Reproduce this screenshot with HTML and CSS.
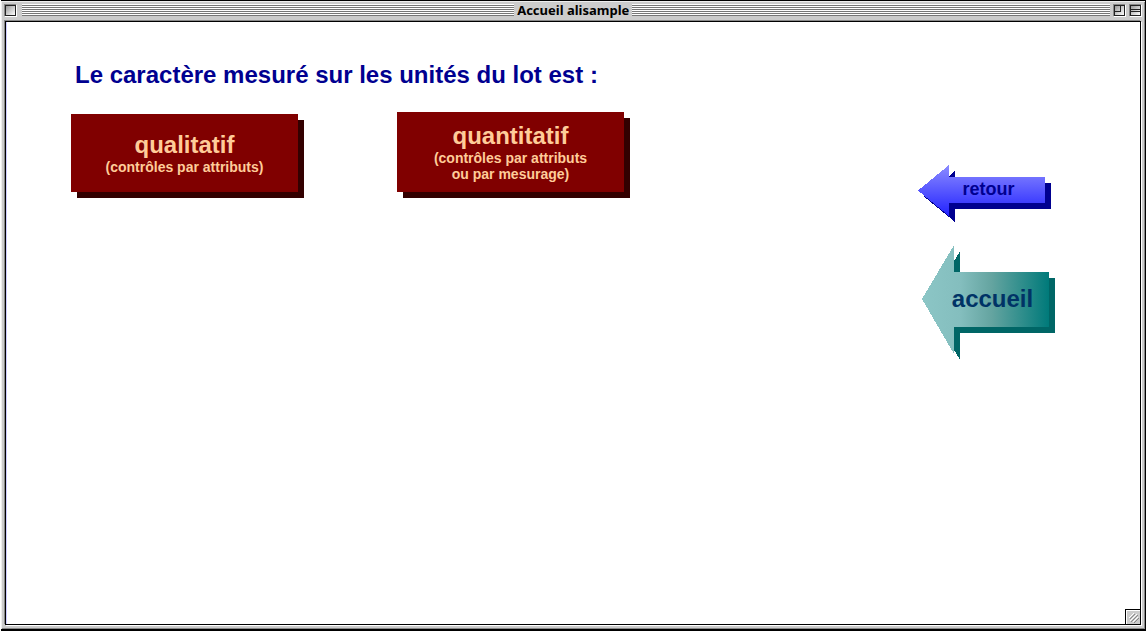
FILE: index.html
```html
<!DOCTYPE html>
<html lang="fr">
<head>
<meta charset="utf-8">
<title>Accueil alisample</title>
<link rel="stylesheet" href="styles.css">
</head>
<body>
<div class="window">
  <header class="titlebar">
    <button class="box" type="button" aria-label="Fermer">
      <svg width="13" height="13" viewBox="0 0 13 13" shape-rendering="crispEdges"><defs><linearGradient id="metal" x1="0" y1="0" x2="1" y2="1"><stop offset="0" stop-color="#999"/><stop offset="1" stop-color="#fff"/></linearGradient></defs><path fill="#888" d="M0 0h12v12H0z"/><path fill="#fff" d="M12 1h1v12H1v-1h11z"/><path fill="#222" d="M1 1h11v11H1z"/><path fill="url(#metal)" d="M2 2h9v9H2z"/></svg>
    </button>
    <span class="stripes"></span>
    <h1 class="title">Accueil alisample</h1>
    <span class="stripes stripes-end"></span>
    <button class="box" type="button" aria-label="Agrandir">
      <svg width="13" height="13" viewBox="0 0 13 13" shape-rendering="crispEdges"><path fill="#888" d="M0 0h12v12H0z"/><path fill="#fff" d="M12 1h1v12H1v-1h11z"/><path fill="#222" d="M1 1h11v11H1z"/><path fill="url(#metal)" d="M2 2h9v9H2z"/><path fill="#222" d="M7 2h1v6H2V7h5z"/></svg>
    </button>
    <button class="box" type="button" aria-label="Réduire">
      <svg width="13" height="13" viewBox="0 0 13 13" shape-rendering="crispEdges"><path fill="#888" d="M0 0h12v12H0z"/><path fill="#fff" d="M12 1h1v12H1v-1h11z"/><path fill="#222" d="M1 1h11v11H1z"/><path fill="url(#metal)" d="M2 2h9v9H2z"/><path fill="#222" d="M2 5h9v1H2zM2 7h9v1H2z"/></svg>
    </button>
  </header>
  <main class="page">
    <section class="question">
      <h2 class="heading">Le caractère mesuré sur les unités du lot est :</h2>
      <div class="choices">
        <button class="choice" type="button"><span class="name">qualitatif</span><span class="note">(contrôles par attributs)</span></button>
        <button class="choice choice-tall" type="button"><span class="name">quantitatif</span><span class="note">(contrôles par attributs<br>ou par mesurage)</span></button>
      </div>
    </section>
    <nav class="links">
      <a class="arrow arrow-back" href="#retour">
        <svg width="133" height="57" viewBox="0 0 133 57" shape-rendering="crispEdges"><defs><linearGradient id="blue" x1="0" y1="0" x2="0" y2="1"><stop offset="0" stop-color="#8c8cff"/><stop offset="1" stop-color="#2222ff"/></linearGradient></defs><path fill="#000090" d="M6 31.500L37 6v12h96v26H37v13z"/><path fill="url(#blue)" d="M0 25.500L31 0v12h96v26H31v13z"/></svg>
        <span class="label">retour</span>
      </a>
      <a class="arrow arrow-home" href="#accueil">
        <svg width="133" height="115" viewBox="0 0 133 115" shape-rendering="crispEdges"><defs><linearGradient id="teal"><stop offset="0" stop-color="#8cc6c6"/><stop offset=".3" stop-color="#84bebe"/><stop offset=".55" stop-color="#64a4a0"/><stop offset="1" stop-color="#007a7a"/></linearGradient></defs><path fill="#006666" d="M6 60L38 6v27h95v55H38v27z"/><path fill="url(#teal)" d="M0 54L32 0v27h95v55H32v27z"/></svg>
        <span class="label">accueil</span>
      </a>
    </nav>
    <svg class="grip" width="15" height="15" viewBox="0 0 15 15" shape-rendering="crispEdges"><path fill="#ccc" d="M0 0h15v15H0z"/><path fill="#000" d="M0 0h15v1H1v14H0z"/><path fill="#fff" d="M1 1h14v1H2v13H1z"/><path stroke="#fff" d="M4 9l5-5M5 12l7-7M8 13l5-5"/><path stroke="#888" d="M5 10l5-5M6 13l7-7M9 14l5-5"/></svg>
  </main>
</div>
</body>
</html>
```
FILE: styles.css
```css
* { box-sizing: border-box; }
body {
  margin: 0;
  background: #fff;
  font-family: "Liberation Sans", Arial, sans-serif;
  font-weight: bold;
}
button { font: inherit; border: 0; padding: 0; background: none; cursor: pointer; }
svg { display: block; }
.window {
  display: flex;
  flex-direction: column;
  min-height: 100vh;
  padding: 0 4px 4px 4px;
  margin: 0 1px;
  background: #ccc;
  border: 1px solid #000;
  border-width: 1px 1px 2px 0;
  box-shadow: inset 1px 1px #eee, inset -1px -1px #888;
}
.titlebar {
  display: flex;
  align-items: center;
  gap: 3px;
  height: 20px;
  padding-bottom: 2px;
  margin: 0 -1px;
}
.box { flex: none; width: 13px; height: 13px; }
.box:first-child { margin-right: 2px; }
.stripes {
  flex: 34;
  height: 12px;
  background: repeating-linear-gradient(#fff 0 1px, #777 1px 2px);
}
.stripes-end { flex: 33; }
.title {
  margin: 0;
  font: bold 13px/14px "Noto Sans", sans-serif;
  color: #000;
}
.page {
  position: relative;
  flex: 1;
  display: flex;
  justify-content: space-between;
  padding: 39px 89px 40px 65px;
  background: #fff;
  border: 1px solid #000;
  box-shadow: inset 1px 0 #ccf, -1px -1px #888, 1px 1px #fff;
}
.heading {
  margin: 0 0 23px 4px;
  font-size: 24px;
  line-height: 28px;
  color: #000090;
}
.choices { display: flex; align-items: flex-end; gap: 99px; }
.choice {
  display: flex;
  flex-direction: column;
  align-items: center;
  justify-content: center;
  width: 227px;
  height: 78px;
  color: #ffcc99;
  background: #800000;
  box-shadow: 6px 6px #330000;
}
.choice-tall { height: 80px; }
.name { font-size: 24px; line-height: 28px; }
.note { font-size: 14px; line-height: 16px; }
.links {
  display: flex;
  flex-direction: column;
  gap: 23px;
  padding-top: 104px;
}
.arrow { display: grid; text-decoration: none; }
.arrow > * { grid-area: 1 / 1; }
.arrow-home { margin-left: 4px; margin-right: -4px; }
.label { z-index: 1; align-self: center; justify-self: center; }
.arrow-back .label { font-size: 18px; line-height: 20px; color: #000090; padding: 0 0 10px 8px; }
.arrow-home .label { font-size: 24px; line-height: 28px; color: #003366; padding: 0 0 8px 8px; }
.grip { position: absolute; right: 0; bottom: 0; }
```
